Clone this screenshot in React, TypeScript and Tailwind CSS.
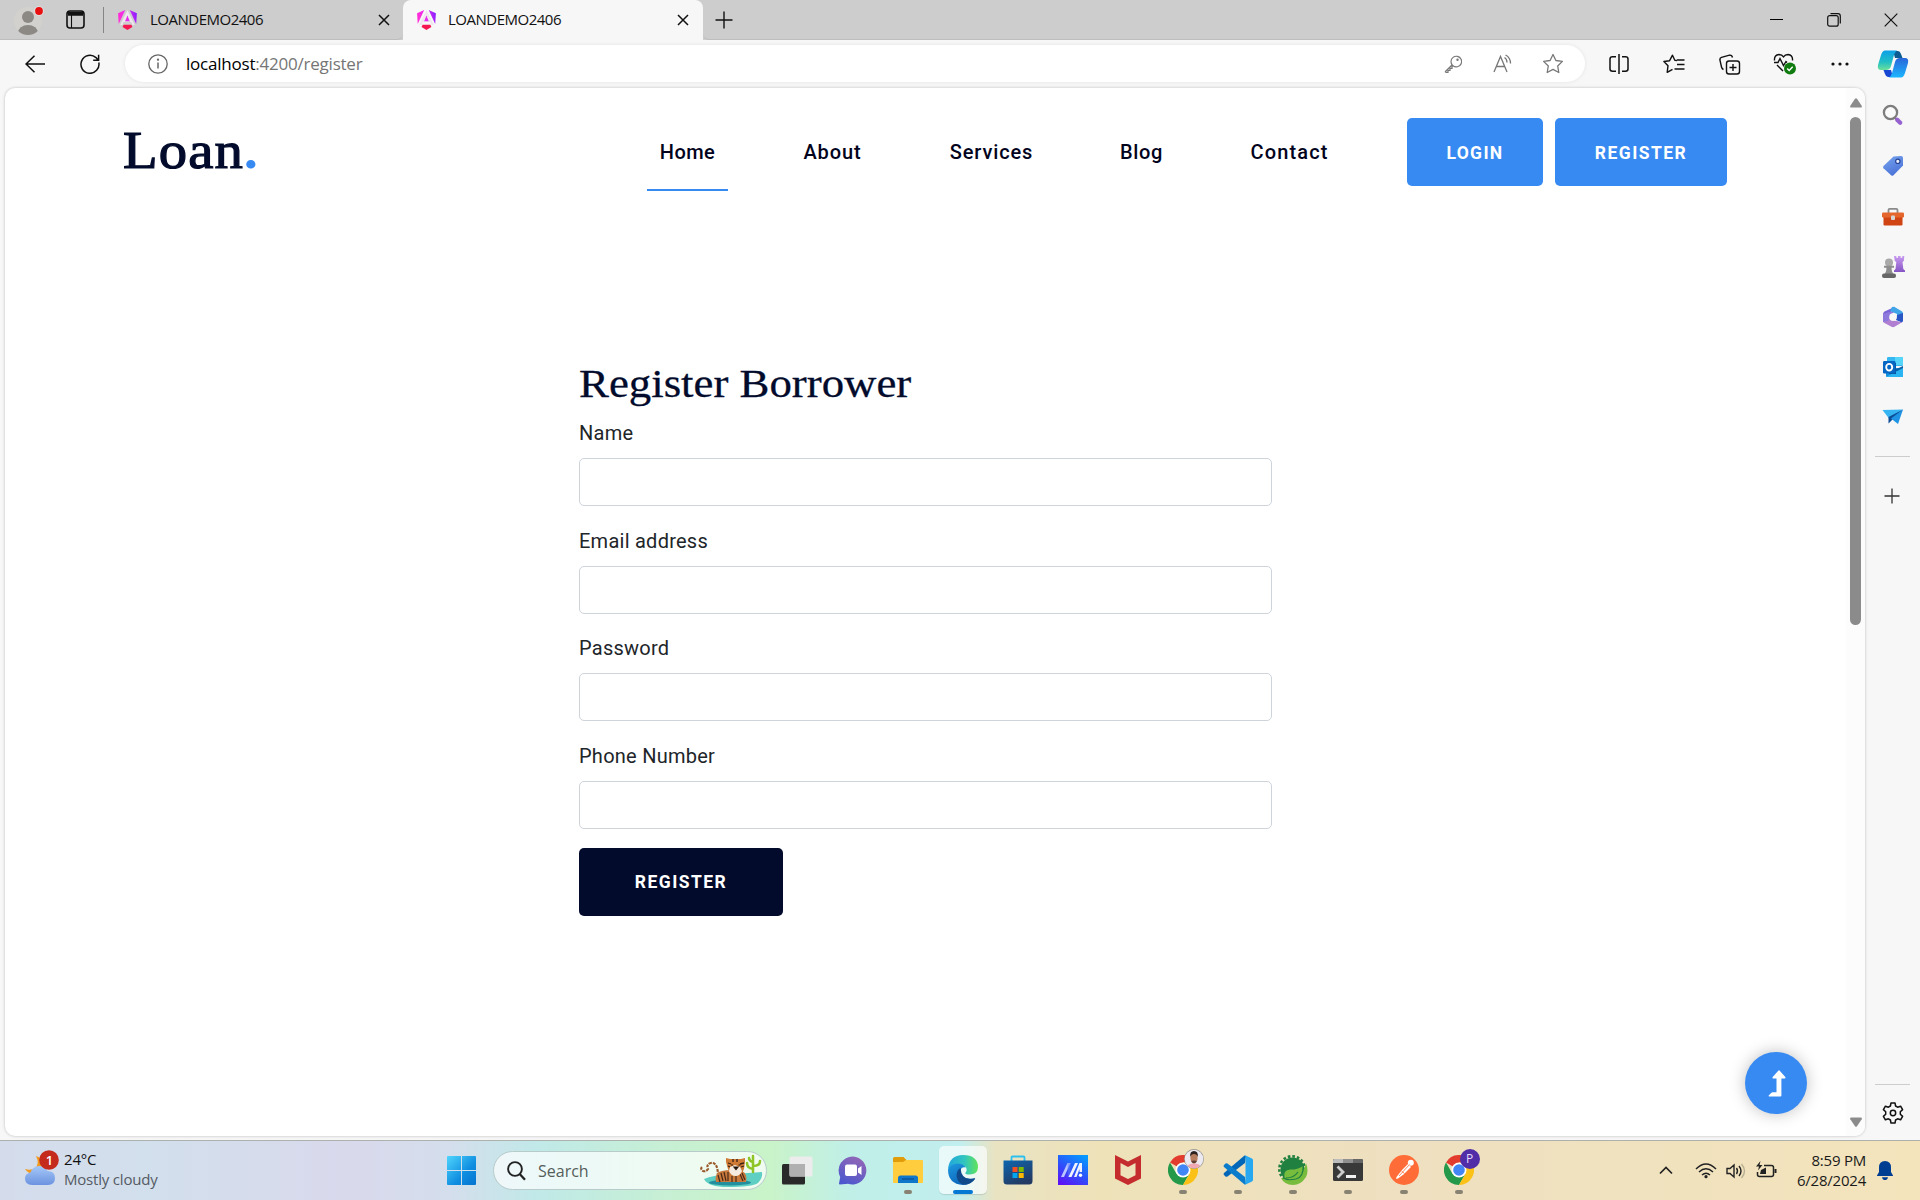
import type { ReactNode } from "react";

type BoxProps = { className?: string; children?: ReactNode };

const UI = "font-['Open_Sans','Noto_Sans',sans-serif]";

function Cell({ className = "", children }: BoxProps) {
  return <div className={`flex shrink-0 items-center justify-center ${className}`}>{children}</div>;
}

/* ---------- Browser chrome icons ---------- */

function AngularLogo({ id }: { id: string }) {
  return (
    <svg width="19" height="20" viewBox="0 0 223 236" className="shrink-0">
      <defs>
        <linearGradient id={id} x1="0" y1="0.3" x2="1" y2="0.1">
          <stop offset="0" stopColor="#ff2fd6" />
          <stop offset="0.55" stopColor="#e22bf5" />
          <stop offset="1" stopColor="#7a1cff" />
        </linearGradient>
      </defs>
      <path
        fill={`url(#${id})`}
        d="M222.077 39.192l-8.019 125.923L137.387 0l84.69 39.192zM111.039 62.675l30.357 73.803H80.681l30.358-73.803zM7.937 165.115L0 39.192 84.69 0 7.937 165.115z"
      />
      <path fill="#f5174f" d="M168.972 202.017l-57.933 33.056-57.934-33.056 11.783-28.556h92.301z" />
      <path fill="#eee5ee" d="M111 2L24 178h28l14-35h90l14 35h28zM111 62l30 74H80z" fillRule="evenodd" />
    </svg>
  );
}

function CloseX() {
  return (
    <svg width="12" height="12" viewBox="0 0 12 12" stroke="#111" strokeWidth="1.5">
      <path d="M1 1L11 11M11 1L1 11" />
    </svg>
  );
}

function Profile() {
  return (
    <svg width="32" height="32" viewBox="0 0 32 32">
      <defs>
        <clipPath id="pf"><circle cx="15" cy="17" r="14" /></clipPath>
      </defs>
      <circle cx="15" cy="17" r="14" fill="#d3d1cd" />
      <g clipPath="url(#pf)" fill="#8c8985">
        <circle cx="15" cy="13" r="6" />
        <ellipse cx="15" cy="29" rx="10" ry="8" />
      </g>
      <circle cx="26" cy="7" r="4.8" fill="#e3e3e3" />
      <circle cx="26" cy="7" r="3.9" fill="#e81010" />
    </svg>
  );
}

function TabActions() {
  return (
    <svg width="19" height="19" viewBox="0 0 19 19" fill="none" stroke="#111" strokeWidth="1.6">
      <rect x="1" y="1" width="17" height="17" rx="3" />
      <path d="M2 3h15M2 4.5h15" strokeWidth="2.4" />
      <path d="M5.5 5v13" strokeWidth="1.1" />
    </svg>
  );
}

/* ---------- Sidebar icons ---------- */

function SideSearch() {
  return (
    <svg width="22" height="22" viewBox="0 0 22 22" fill="none">
      <path d="M12.5 13.5l3 3" stroke="#777" strokeWidth="2" />
      <circle cx="8.5" cy="8.5" r="6.6" stroke="#7d7d7d" strokeWidth="2.3" fill="#fafafa" />
      <path d="M15.2 15.7l3 3" stroke="#9662cf" strokeWidth="4.2" strokeLinecap="round" />
    </svg>
  );
}
function SideTag() {
  return (
    <svg width="22" height="22" viewBox="0 0 22 22">
      <defs><linearGradient id="tg" x1="0" y1="0" x2="0.5" y2="1"><stop stopColor="#78a6ee" /><stop offset="1" stopColor="#4b73d8" /></linearGradient></defs>
      <path d="M11.5 1.5L19 1q2 0 2 2v7.500L11.500 20.300q-1.200 1-2.400 0L1.500 13.300q-1-1.200 0-2.400z" fill="url(#tg)" />
      <circle cx="15.8" cy="6.300" r="2.200" fill="#e8f0ff" stroke="#264394" strokeWidth="1.200" />
    </svg>
  );
}
function SideBriefcase() {
  return (
    <svg width="24" height="20" viewBox="0 0 24 20">
      <path d="M7.500 6V3q0-1.200 1.200-1.200h6.600q1.200 0 1.200 1.200v3" fill="none" stroke="#8a8a8a" strokeWidth="1.800" />
      <rect x="2.500" y="9" width="19" height="9.500" rx="1.200" fill="#cf4412" />
      <rect x="1" y="5.500" width="22" height="5" rx="1.200" fill="#e5662d" />
      <rect x="10" y="8.500" width="4" height="4.500" rx="1" fill="#d5d5d5" />
    </svg>
  );
}
function SideGames() {
  return (
    <svg width="24" height="24" viewBox="0 0 24 24">
      <defs><linearGradient id="gm" x1="0" y1="0" x2="0" y2="1"><stop stopColor="#c99af0" /><stop offset="1" stopColor="#8454c4" /></linearGradient></defs>
      <path d="M13 1h2.300v1.800h1.700V1h2.600v1.800h1.700V1h2l-.500 5-1.300 1 .8 7 1.700 1.500V17H13v-1.500L14.500 14l.8-7-1.500-1z" fill="url(#gm)" />
      <circle cx="8" cy="7.500" r="4" fill="#a9a9a9" />
      <path d="M3 10.800h10v2h-2.500q0 4 1.700 6.200H3.800q1.700-2 1.700-6.200H3z" fill="#8d8d8d" />
      <rect x="1" y="18.500" width="14" height="4.500" rx="2" fill="#666" />
    </svg>
  );
}
function SideM365() {
  return (
    <svg width="22" height="22" viewBox="0 0 22 22">
      <path d="M13 .8L2.500 5.500Q1 6.500 1 8v8l6.500-3V8.500z" fill="#7a63d6" />
      <path d="M10 1q1.300-.7 2.600 0l7.200 4.200Q21 6 21 7.500V14l-6-4V8L8 5z" fill="#3fa4e8" />
      <path d="M15 9l6-2v7.500q0 1.300-1.200 2L14 14z" fill="#2a55c4" />
      <path d="M1 15l6-3 2 2.500 5.500.5 5.700 1.200-7.700 4.600q-1.500.7-3 0L2 16.800Q1 16.200 1 15z" fill="#b07fd2" />
      <path d="M7 6l5 0-4 4-2 5-5 1V8z" fill="#8d78dc" />
      <circle cx="11" cy="11" r="3.800" fill="#f7f7f7" />
    </svg>
  );
}
function SideOutlook() {
  return (
    <svg width="22" height="22" viewBox="0 0 22 22">
      <rect x="5" y="1" width="16" height="9" rx="1.200" fill="#35b8f1" />
      <rect x="13" y="1" width="8" height="8" fill="#56d5fb" />
      <path d="M4 12h17v8q0 1-1 1H5q-1 0-1-1z" fill="#1490df" />
      <path d="M21 10v9.500L12.500 14z" fill="#0b5fa5" />
      <path d="M4 21l17-9v8q0 1-1 1z" fill="#2ab5f2" />
      <path d="M14 7v11H7V7z" fill="#0a4f93" />
      <rect x="1" y="5" width="12.500" height="12.500" rx="1.200" fill="#0668c4" />
      <ellipse cx="7.200" cy="11.200" rx="3" ry="3.300" fill="none" stroke="#fff" strokeWidth="1.900" />
    </svg>
  );
}
function SidePlane() {
  return (
    <svg width="22" height="18" viewBox="0 0 22 18">
      <path d="M0.500 2L21 1.500 7 10.500z" fill="#37b5f2" />
      <path d="M21 1.500L6.500 9v6.500L10 12z" fill="#0c4f96" />
      <path d="M21 1.500L9 10.500l7 5.500z" fill="#1f93e4" />
    </svg>
  );
}
function Copilot() {
  return (
    <svg width="32" height="30" viewBox="0 0 32 30">
      <defs>
        <linearGradient id="cp1" x1="0" y1="0" x2="0" y2="1"><stop stopColor="#0ca0e8" /><stop offset="0.600" stopColor="#23bfc4" /><stop offset="1" stopColor="#6be19a" /></linearGradient>
        <linearGradient id="cp2" x1="0" y1="0" x2="0" y2="1"><stop stopColor="#2a66d9" /><stop offset="1" stopColor="#1cb6ff" /></linearGradient>
      </defs>
      <path d="M16 2h5q2 0 3 3l1.500 4H18z" fill="#0b5c93" />
      <path d="M16 28h-5q-2 0-3-3l-1.500-4H14z" fill="#1847d4" />
      <path d="M8 1.500h12q-2 1-3 4.500l-3 11q-1 4-5 4H4q-4 0-3-5L4 6q1.500-4.500 4-4.500z" fill="url(#cp1)" />
      <path d="M24 28.500H12q2-1 3-4.500l3-11q1-4 5-4h5q4 0 3 5l-3 10q-1.500 4.500-4 4.500z" fill="url(#cp2)" />
    </svg>
  );
}

/* ---------- Browser sections ---------- */

function TabStrip() {
  return (
    <div className={`flex h-10 shrink-0 bg-[#cdcdcd] text-[15px] leading-none text-[#111] ${UI}`}>
      <div className="flex h-10 w-[403px] items-center rounded-br-[6px] border-b border-[#bdbdbd]">
        <Cell className="ml-[13px] w-8"><Profile /></Cell>
        <Cell className="ml-[20px] w-[20px]"><TabActions /></Cell>
        <div className="ml-[18px] h-[26px] w-px bg-[#858585]" />
        <div className="ml-[14px]"><AngularLogo id="ng1" /></div>
        <span className="ml-[13px] w-[220px] whitespace-nowrap tracking-[-0.5px]">LOANDEMO2406</span>
        <Cell className="ml-[8px] w-3"><CloseX /></Cell>
      </div>
      <div className="flex h-10 w-[300px] items-center rounded-t-[8px] bg-[#f7f7f7] pb-px">
        <div className="ml-[14px]"><AngularLogo id="ng2" /></div>
        <span className="ml-[12px] w-[220px] whitespace-nowrap tracking-[-0.5px]">LOANDEMO2406</span>
        <Cell className="ml-[9px] w-3"><CloseX /></Cell>
      </div>
      <div className="flex flex-1 items-center rounded-bl-[6px] border-b border-[#bdbdbd]">
        <svg width="18" height="18" viewBox="0 0 18 18" stroke="#111" strokeWidth="1.400" className="ml-[12px]">
          <path d="M9 0.500v17M0.500 9h17" />
        </svg>
        <div className="flex-1" />
        <Cell className="w-[57px]"><div className="h-[1.500px] w-[13px] bg-black" /></Cell>
        <Cell className="w-[57px]">
          <svg width="14" height="14" viewBox="0 0 14 14" fill="none" stroke="#111" strokeWidth="1.200">
            <rect x="0.700" y="2.700" width="10.500" height="10.500" rx="2" />
            <path d="M3.500 0.700H11q2.300 0 2.300 2.300v7.500" />
          </svg>
        </Cell>
        <Cell className="w-[58px]">
          <svg width="14" height="14" viewBox="0 0 14 14" stroke="#111" strokeWidth="1.200"><path d="M0.700 0.700l12.600 12.600M13.300 0.700L0.700 13.300" /></svg>
        </Cell>
      </div>
    </div>
  );
}

function Toolbar() {
  return (
    <div className="flex h-12 shrink-0 items-center bg-[#f7f7f7]">
      <Cell className="ml-[24px] w-[22px]">
        <svg width="20" height="18" viewBox="0 0 20 18" fill="none" stroke="#111" strokeWidth="1.500"><path d="M20 9H1M9.500 0.700L1 9l8.500 8.300" /></svg>
      </Cell>
      <Cell className="ml-[33px] w-[22px]">
        <svg width="20" height="20" viewBox="0 0 20 20" fill="none" stroke="#111" strokeWidth="1.500"><path d="M18.800 8.500A9 9 0 1 1 16 3.600L18 6M18.600 0.800V6.200H13.200" /></svg>
      </Cell>
      <div className="ml-[24px] mt-[-1px] flex h-[37px] w-[1460px] items-center rounded-full bg-white shadow-[0_0_4px_rgba(0,0,0,0.080)]">
        <Cell className="ml-[22px] w-[22px]">
          <svg width="20" height="20" viewBox="0 0 20 20" fill="none" stroke="#666" strokeWidth="1.300"><circle cx="10" cy="10" r="9.200" /><path d="M10 8.500v6" strokeWidth="1.500" /><circle cx="10" cy="5.700" r="0.500" fill="#666" /></svg>
        </Cell>
        <span className={`ml-[17px] w-[240px] whitespace-nowrap text-[17px] tracking-[-0.220px] text-[#757575] ${UI}`}>
          <span className="text-black">localhost</span>:4200/register
        </span>
        <div className="flex-1" />
        <Cell className="w-[50px]">
          <svg width="18" height="18" viewBox="0 0 18 18" fill="none" stroke="#777" strokeWidth="1.200">
            <path d="M8.200 9.800L1.500 16.300Q1 17.300 2.500 17.300H4v-2h2v-2h2v-1.800l1-.8A5.300 5.300 0 1 0 7 6.500Q7 8.500 8.200 9.800z" /><circle cx="13.500" cy="4.800" r="0.600" fill="#777" />
          </svg>
        </Cell>
        <Cell className="w-[50px]">
          <svg width="20" height="20" viewBox="0 0 20 20" fill="none" stroke="#777" strokeWidth="1.300">
            <path d="M1 18L7.500 2.500L14 18M3.200 12.500H11.800M11.500 3.500q2.500 1.500 2.500 5M12.500 1q5 2.500 5 8.500" />
          </svg>
        </Cell>
        <Cell className="mr-[7px] w-[50px]">
          <svg width="22" height="21" viewBox="0 0 22 21" fill="none" stroke="#777" strokeWidth="1.300" strokeLinejoin="round">
            <path d="M11 1.500l2.900 6 6.500.9-4.700 4.600 1.100 6.500L11 16.400l-5.800 3.100 1.100-6.500L1.600 8.400l6.500-.9z" />
          </svg>
        </Cell>
      </div>
      <div className="flex flex-1 items-center pl-[6px]">
        <Cell className="w-[55px]">
          <svg width="20" height="20" viewBox="0 0 20 20" fill="none" stroke="#111" strokeWidth="1.500"><path d="M10 0v20M7 2.800H3.500Q1 2.800 1 5v10q0 2.200 2.500 2.200H7M13 2.800h3.500Q19 2.800 19 5v10q0 2.200-2.500 2.200H13" /></svg>
        </Cell>
        <Cell className="w-[56px]">
          <svg width="22" height="20" viewBox="0 0 22 20" fill="none" stroke="#111" strokeWidth="1.400" strokeLinejoin="round"><path d="M14 6.500L11.800 6.200 9.500 1.200 6.600 6.700.9 7.500 5 11.700 4.200 18.300 9.500 15.300M14 6h7.500M14 10.500h7.500M11.500 15h10" /></svg>
        </Cell>
        <Cell className="w-[55px]">
          <svg width="22" height="21" viewBox="0 0 22 21" fill="none" stroke="#111" strokeWidth="1.400"><rect x="7.500" y="7" width="13" height="13" rx="2.500" /><path d="M14 10v7M10.500 13.500h7M4.500 15.500Q3 15 2.500 13L.9 6Q.700 4 2.500 3.400L10.500 1.200Q13 .9 13.500 3.500" /></svg>
        </Cell>
        <Cell className="w-[55px]">
          <svg width="23" height="22" viewBox="0 0 23 22" fill="none" stroke="#111" strokeWidth="1.400"><path d="M1.500 7.500Q1 2 6 1.500q3 0 4.500 2.300Q12 1.500 15 1.500q5 .5 4.500 6M4 12l6 6M1 9.500h4l2-4 3.500 7 2.500-4 1 1" /><circle cx="17" cy="15.500" r="6" fill="#107c10" stroke="none" /><path d="M14.200 15.500l2 2 3.500-3.700" stroke="#fff" /></svg>
        </Cell>
        <Cell className="w-[55px]">
          <svg width="18" height="4" viewBox="0 0 18 4" fill="#111"><circle cx="2" cy="2" r="1.600" /><circle cx="9" cy="2" r="1.600" /><circle cx="16" cy="2" r="1.600" /></svg>
        </Cell>
        <Cell className="w-[52px]"><Copilot /></Cell>
      </div>
    </div>
  );
}

/* ---------- Web page ---------- */

function NavLink({ label, className, active = false }: { label: string; className: string; active?: boolean }) {
  return (
    <a className={`relative flex h-full shrink-0 items-center justify-center whitespace-nowrap ${className}`}>
      {label}
      {active && <span className="absolute inset-x-0 -bottom-[5px] h-[2px] bg-[#378af2]" />}
    </a>
  );
}

function SiteHeader() {
  return (
    <header className="flex h-[68px] items-center pl-[118px] text-[20px] font-medium text-[#02031c]">
      <div className="mt-[-3px] w-[524px] shrink-0 whitespace-nowrap font-['Liberation_Serif',serif] text-[52px] font-normal leading-none text-[#020b2b]">
        <span className="inline-block origin-left scale-x-[1.090] tracking-[1px] [-webkit-text-stroke:1.200px_#020b2b]">
          Loan<span className="font-bold text-[#378af2] [-webkit-text-stroke:0px]">.</span>
        </span>
      </div>
      <NavLink label="Home" className="w-[81px] tracking-[0.400px]" active />
      <NavLink label="About" className="ml-[62px] w-[85px] tracking-[0.900px]" />
      <NavLink label="Services" className="ml-[62px] w-[109px] tracking-[0.850px]" />
      <NavLink label="Blog" className="ml-[61px] w-[69px] tracking-[0.700px]" />
      <NavLink label="Contact" className="ml-[61px] w-[105px] tracking-[1.150px]" />
      <button className="ml-[65px] h-[68px] w-[136px] shrink-0 rounded-[5px] bg-[#378af2] pt-[2px] text-[17.500px] font-bold tracking-[1.350px] text-white">LOGIN</button>
      <button className="ml-[12px] h-[68px] w-[172px] shrink-0 rounded-[5px] bg-[#378af2] pt-[2px] text-[17.500px] font-bold tracking-[1.450px] text-white">REGISTER</button>
    </header>
  );
}

function Field({ label }: { label: string }) {
  return (
    <label className="flex h-[107.500px] flex-col">
      <span className="h-[38px] text-[20px] leading-[27px] tracking-[0.250px] text-[#212529]">{label}</span>
      <input className="h-[48px] w-full rounded-[5px] border border-[#ced4da] bg-white" />
    </label>
  );
}

function WebPage() {
  return (
    <main className="relative ml-[5px] flex h-[1048px] w-[1860px] shrink-0 overflow-hidden rounded-[10px] bg-white font-[Roboto,sans-serif] shadow-[0_0_3px_rgba(0,0,0,0.250)]">
      <div className="w-[1841px] pt-[30px]">
        <SiteHeader />
        <form className="ml-[574px] mt-[171px] w-[693px]">
          <h2 className="h-[63px] origin-left scale-x-[1.093] whitespace-nowrap font-['Liberation_Serif',serif] text-[41px] leading-[52px] text-[#020b2b] [-webkit-text-stroke:0.300px_#020b2b]">Register Borrower</h2>
          <Field label="Name" />
          <Field label="Email address" />
          <Field label="Password" />
          <Field label="Phone Number" />
          <button type="button" className="-mt-[2px] h-[68px] w-[204px] rounded-[5px] bg-[#020b2b] pt-[1px] text-[17.500px] font-bold tracking-[1.450px] text-white">REGISTER</button>
        </form>
      </div>
      <div className="flex w-[19px] flex-col items-center bg-[#fcfcfc] pt-[10px]">
        <svg width="12" height="10" viewBox="0 0 12 10" fill="#8b8b8b"><path d="M5 .8Q6-.4 7 .8l4.700 7Q12.200 9.500 11 9.500H1Q-.2 9.500.3 7.800z" /></svg>
        <div className="mt-[9px] h-[508px] w-[11px] rounded-full bg-[#8b8b8b]" />
        <div className="flex-1" />
        <svg width="12" height="10" viewBox="0 0 12 10" fill="#8b8b8b" className="mb-[9px] rotate-180"><path d="M5 .8Q6-.4 7 .8l4.700 7Q12.200 9.500 11 9.500H1Q-.2 9.500.3 7.800z" /></svg>
      </div>
      <button className="absolute bottom-[22px] right-[58px] flex size-[62px] items-center justify-center rounded-full bg-[#378af2] shadow-[0_0_16px_rgba(0,0,0,0.250)]">
        <svg width="18" height="27" viewBox="0 0 18 27" fill="#fff" className="ml-[1px]"><path d="M10.500.6Q11 .1 11.500.6l5.800 6.500q.6 1.200-.7 1.300h-3.200v17.100q0 1-1 1H1.300Q0 26.300.9 25.200l2.500-2.400q.5-.6 1.300-.6H8.500V8.400H5.200Q3.900 8.300 4.700 7.100z" /></svg>
      </button>
    </main>
  );
}

function Sidebar() {
  return (
    <aside className="flex h-[1052px] w-[55px] shrink-0 flex-col items-center">
      <Cell className="h-[54px]"><SideSearch /></Cell>
      <Cell className="h-[48px]"><SideTag /></Cell>
      <Cell className="h-[54px]"><SideBriefcase /></Cell>
      <Cell className="h-[46px]"><SideGames /></Cell>
      <Cell className="h-[53px]"><SideM365 /></Cell>
      <Cell className="h-[47px]"><SideOutlook /></Cell>
      <Cell className="h-[53px]"><SidePlane /></Cell>
      <div className="mt-[13px] h-px w-[35px] bg-[#cdcdcd]" />
      <svg width="16" height="16" viewBox="0 0 16 16" stroke="#333" strokeWidth="1.300" className="mr-[1px] mt-[31px]"><path d="M8 .5v15M.5 8h15" /></svg>
      <div className="flex-1" />
      <div className="h-px w-[35px] bg-[#cdcdcd]" />
      <svg width="22" height="22" viewBox="0 0 22 22" fill="none" stroke="#111" strokeWidth="1.500" strokeLinejoin="round" className="mb-[16px] mt-[17px]">
        <path d="M9 1h4l.6 3 2 1.200 3-1 2 3.400L18.300 9.800v2.400l2.300 2.200-2 3.400-3-1-2 1.200L13 21H9l-.6-3-2-1.200-3 1-2-3.400 2.300-2.200V9.800L1.400 7.600l2-3.400 3 1 2-1.200z" />
        <circle cx="11" cy="11" r="2.700" />
      </svg>
    </aside>
  );
}

/* ---------- Taskbar ---------- */

function Weather() {
  return (
    <svg width="36" height="38" viewBox="0 0 36 38">
      <defs><linearGradient id="cl" x1="0" y1="0" x2="0" y2="1"><stop stopColor="#a5c8f8" /><stop offset="1" stopColor="#6c93e0" /></linearGradient></defs>
      <path d="M12 7q4 8-1 12-4 3-10 1Q4 25 11 25q8-1 8-9 0-7-7-9z" fill="#f19a1f" />
      <path d="M8 36q-7 0-7-6.500 0-5 5.500-6Q9 17 15 17q6.500 0 8.500 5 7.500 0 7.500 7t-7 7z" fill="url(#cl)" />
      <circle cx="25" cy="11" r="9.800" fill="#c42b1c" />
      <text x="21.700" y="15.500" fontSize="13" fontWeight="600" fill="#fff" fontFamily="Open Sans">1</text>
    </svg>
  );
}
function WindowsLogo() {
  return (
    <svg width="29" height="29" viewBox="0 0 29 29">
      <defs><linearGradient id="wn" x1="0" y1="0" x2="1" y2="1"><stop stopColor="#4fd5fd" /><stop offset="0.600" stopColor="#0f8ee0" /><stop offset="1" stopColor="#0573d0" /></linearGradient></defs>
      <path fill="url(#wn)" d="M1 0h13v14H0V1q0-1 1-1zM15 0h13q1 0 1 1v13H15zM0 15h14v14H1q-1 0-1-1zM15 15h14v13q0 1-1 1H15z" />
    </svg>
  );
}
function Tiger() {
  return (
    <svg width="64" height="34" viewBox="0 0 64 34">
      <path d="M5 25q8-4 30-5l28-2q1 6-4 11-6 4-30 4-20 0-24-8z" fill="#5fcfc4" />
      <ellipse cx="31" cy="28.500" rx="21" ry="3" fill="#238f9e" />
      <path d="M19 22Q19 8 12 9q-5 1-3 6-2 3-5 2-3-2-1-4" fill="none" stroke="#9b5a2b" strokeWidth="2.200" strokeDasharray="3 1" />
      <path d="M17 28q-2-10 6-11 8-2 20 0 6 3 4 11z" fill="#c9793c" />
      <path d="M19 21l2 7M22 19l2 8M25 18l2 9M29 18v9M41 20l3 7M43 19l3 7M33 22v6M37 22v6" stroke="#4a2a18" strokeWidth="1.200" />
      <path d="M27 4l4 1h11l4-1v4l-1 7q-2 6-8 6.500-6-.5-8-6.500l-2-7z" fill="#cf7a35" />
      <path d="M31 13l5-2 5 2 2 4q-2 5-6.500 5T30 17z" fill="#f4eadf" />
      <path d="M34 5v3M38 5v3M29 9l3 1M45 9l-4 1M29 12l2 1M45 12l-3 1" stroke="#3c2214" strokeWidth="1.300" />
      <path d="M35 13h4l-2 2.500zM32 11h2M39.500 11h2" stroke="#2b1a12" strokeWidth="1.200" />
      <path d="M54 18V2M54 15q-6-1-6-6M54 12q7 0 7-5M54 8q-4-1-4-4" stroke="#8fc427" strokeWidth="2.500" fill="none" strokeLinecap="round" />
    </svg>
  );
}
function TaskView() {
  return (
    <svg width="31" height="29" viewBox="0 0 31 29">
      <rect x="0" y="8" width="23" height="20.500" rx="1.500" fill="#292929" />
      <rect x="7.500" y="0.500" width="23" height="20" rx="1.500" fill="#ececec" />
      <path d="M7.500 8H23v12.500H9q-1.500 0-1.500-1.500z" fill="#b0b0b0" />
    </svg>
  );
}
function Chat() {
  return (
    <svg width="30" height="29" viewBox="0 0 30 29">
      <defs><linearGradient id="ct" x1="0.800" y1="0" x2="0.300" y2="1"><stop stopColor="#9567b5" /><stop offset="1" stopColor="#4d58ce" /></linearGradient></defs>
      <path d="M15 .5a14 14 0 1 1-5 27.300L2 28.500q-1.200 0-1-1l1.200-6.500A14 14 0 0 1 15 .5z" fill="url(#ct)" />
      <rect x="7" y="8.500" width="12" height="11.500" rx="2" fill="#fff" /><path d="M20 12.500l3.500-2.500v9L20 16.500z" fill="#fff" />
    </svg>
  );
}
function Folder() {
  return (
    <svg width="30" height="28" viewBox="0 0 30 28">
      <path d="M1.500 1h9l3 3H22v6H0V2.500Q0 1 1.500 1z" fill="#e09c09" />
      <path d="M0 6h10l3-2h16q1 0 1 1v22H0z" fill="#ffcd3e" />
      <path d="M5 27v-5q0-2.500 2.500-2.500h15q2.500 0 2.500 2.500v5z" fill="#0f77c9" /><path d="M9 23h12" stroke="#0a4f93" strokeWidth="1.300" />
    </svg>
  );
}
function Edge() {
  return (
    <svg width="30" height="30" viewBox="0 0 30 30">
      <defs>
        <linearGradient id="eg1" x1="0" y1="0.500" x2="1" y2="0.500"><stop stopColor="#22a5dc" /><stop offset="0.550" stopColor="#31c5c0" /><stop offset="1" stopColor="#62e35a" /></linearGradient>
        <linearGradient id="eg2" x1="0" y1="0" x2="0.600" y2="1"><stop stopColor="#1e9ae0" /><stop offset="1" stopColor="#0c62b7" /></linearGradient>
      </defs>
      <path d="M15 0q15 0 15 12.500-.5 7-8.500 7-5 0-4-2 2-2 .5-5Q14 8.500 8 10L0 14Q1.500 0 15 0z" fill="url(#eg1)" />
      <path d="M0 14.500Q3 8.500 10 8.500q6 .500 7.500 4-4-1-5 3-1 10 14.500 8-4 6.500-12 6.500Q0 29 0 14.500z" fill="url(#eg2)" />
      <path d="M12.500 13q-4 2-4 8 1.500 8 8 8.800 7-.8 10.500-5.800.500-1-.5-.7-13 3.200-14-10.300z" fill="#114a8b" />
    </svg>
  );
}
function Store() {
  return (
    <svg width="30" height="30" viewBox="0 0 30 30">
      <defs><linearGradient id="st" x1="0" y1="0" x2="0.500" y2="1"><stop stopColor="#0e66b0" /><stop offset="1" stopColor="#233b64" /></linearGradient></defs>
      <path d="M8.500 7V2.500q0-1 1-1h11q1 0 1 1V7" fill="none" stroke="#2cc0ef" strokeWidth="1.800" />
      <path d="M.5 5.500h29V26q0 3.500-3.500 3.500H4Q.5 29.500.5 26z" fill="url(#st)" />
      <path d="M9.500 12h5v5h-5z" fill="#f25022" /><path d="M15.700 12h5v5h-5z" fill="#7fba00" /><path d="M9.500 18h5v5h-5z" fill="#00a4ef" /><path d="M15.700 18h5v5h-5z" fill="#ffb900" />
    </svg>
  );
}
function MyAsus() {
  return (
    <svg width="30" height="30" viewBox="0 0 30 30">
      <defs><linearGradient id="ma" x1="0.800" y1="0" x2="0.200" y2="1"><stop stopColor="#0799ff" /><stop offset="0.500" stopColor="#2b55fb" /><stop offset="1" stopColor="#5c14f5" /></linearGradient></defs>
      <rect width="30" height="30" fill="url(#ma)" />
      <path d="M3 22L9.500 8h3L6 22z" fill="#b9c6ff" />
      <path d="M9.500 8h3v14H9.800z" fill="#5a7bfc" opacity="0.500" />
      <path d="M10.500 22L17 8h3L13.500 22zM16 22l5.500-14H24v9h-2.500v-3L18.500 22z" fill="#f0f3ff" /><circle cx="22.500" cy="20.300" r="1.700" fill="#fff" />
    </svg>
  );
}
function McAfee() {
  return (
    <svg width="28" height="30" viewBox="0 0 28 30"><path d="M1 0l13 6.500L27 0v23.500L14 30 1 23.500zM6.500 8v12.300L14 24l7.500-3.700V8L14 12z" fill="#c52c2e" fillRule="evenodd" /></svg>
  );
}
function Chrome({ children }: { children?: ReactNode }) {
  return (
    <div className="relative size-[30px]">
      <svg width="30" height="30" viewBox="0 0 30 30">
        <path d="M15 15L2 7.500A15 15 0 0 1 28 7.500H15z" fill="#e33b2e" />
        <path d="M15 15l6.500 3.700L15 30A15 15 0 0 1 2 7.500l6.500 11.200z" fill="#24994a" />
        <path d="M15 7.500h13A15 15 0 0 1 15 30l6.500-11.200z" fill="#fbc116" />
        <circle cx="15" cy="15" r="7.500" fill="#fff" /><circle cx="15" cy="15" r="5.800" fill="#4285f4" />
      </svg>
      {children}
    </div>
  );
}
function Avatar() {
  return (
    <svg width="20" height="20" viewBox="0 0 20 20" className="absolute -top-[6px] left-[16px]">
      <defs><clipPath id="av"><circle cx="10" cy="10" r="9.300" /></clipPath></defs>
      <circle cx="10" cy="10" r="9.900" fill="#8f8f8f" />
      <g clipPath="url(#av)"><rect width="20" height="20" fill="#eceaf0" /><ellipse cx="10" cy="19" rx="7.500" ry="4.500" fill="#f0a9b3" /><ellipse cx="10" cy="9" rx="3.600" ry="5.500" fill="#b77d5f" /><path d="M6.200 8Q5.500 2 10 2t3.800 6q-1-3-3.800-3T6.200 8z" fill="#2c211e" /><path d="M7.200 12q2.800-1 5.600 0-1 2.300-2.800 2.300T7.200 12z" fill="#5f4036" /></g>
    </svg>
  );
}
function VsCode() {
  return (
    <svg width="30" height="30" viewBox="0 0 30 30">
      <path d="M22 8L4.500 21.500q-1 .6-2 0L1 20q-1-1 0-2L21.500 0.500 23 1z" fill="#0066b8" />
      <path d="M22 22L4.500 8.500q-1-.6-2 0L1 10q-1 1 0 2l20.500 17.500L23 29z" fill="#0a7ccb" />
      <path d="M21.500 0l7 3.200q1.500.7 1.500 2v19.600q0 1.300-1.500 2L21.500 30q1-.5 1-2V2q0-1.500-1-2z" fill="#28a8f0" />
    </svg>
  );
}
function Spring() {
  return (
    <svg width="30" height="30" viewBox="0 0 30 30">
      <circle cx="14" cy="14" r="12.700" fill="none" stroke="#1f8040" strokeWidth="2.600" strokeDasharray="2.600 2" />
      <circle cx="14.500" cy="14.500" r="12" fill="#1f8040" />
      <path d="M28 8q3 8 0 14-5 8-13 8Q6 29.500 3 23q10 3 18-3 6-5 7-12z" fill="#77bc3d" />
      <path d="M25 10q1 12-7 14-9 2-12-1Q4 15 12 14q9 0 13-4z" fill="#77bc3d" stroke="#1f8040" strokeWidth="1.100" />
      <path d="M8 23q8 0 12-6" stroke="#1f8040" strokeWidth="1.200" fill="none" />
    </svg>
  );
}
function Terminal() {
  return (
    <svg width="30" height="22" viewBox="0 0 30 22">
      <rect width="30" height="22" rx="1.500" fill="#383838" />
      <path d="M1.500 0H10v4H0V1.500Q0 0 1.500 0z" fill="#bcbcbc" /><path d="M10 0h10v4H10z" fill="#8f8f8f" /><path d="M20 0h8.500Q30 0 30 1.500V4H20z" fill="#666" />
      <path d="M4.500 7.500L10 13l-5.500 5.500" fill="none" stroke="#ccc" strokeWidth="2.800" /><rect x="13" y="16" width="10" height="3" fill="#f0f0f0" />
    </svg>
  );
}
function Postman() {
  return (
    <svg width="30" height="30" viewBox="0 0 30 30">
      <circle cx="15" cy="15" r="15" fill="#ff6c37" />
      <circle cx="21.800" cy="7.700" r="3" fill="#fff" /><path d="M19 9l3 3-7.500 7.500-5.500 4-2 .5.500-2L13 15z" fill="#fff" /><path d="M20.500 9.500L10 21M12.500 16l3 2.500" stroke="#ff6c37" strokeWidth="0.800" />
    </svg>
  );
}

function TaskItem({ children, running = false, active = false }: { children: ReactNode; running?: boolean; active?: boolean }) {
  return (
    <div className="flex h-full w-[55.100px] shrink-0 justify-center">
      <div className={`relative mt-[5px] flex h-12 w-12 items-center justify-center rounded-[5px] ${active ? "bg-[#ffffffa6] shadow-[0_1px_1px_rgba(0,0,0,0.120)]" : ""}`}>
        {children}
        {running && <span className={`absolute bottom-0 h-1 rounded-full ${active ? "w-[20px] bg-[#0578d4]" : "w-2 bg-[#888272]"}`} />}
      </div>
    </div>
  );
}

function Taskbar() {
  return (
    <footer className={`flex h-[60px] shrink-0 items-center border-t border-[#adb1ae] bg-[linear-gradient(90deg,#d4dcec_0,#d2dfec_150px,#d9d9ec_350px,#d4deec_450px,#c0e9e8_540px,#c7f0d2_680px,#c9f3c8_770px,#c0efe8_850px,#c1eeee_960px,#e9e3c2_995px,#eee2b9_1100px,#eee0c0_1400px,#f3e4bc_1920px)] ${UI}`}>
      <div className="ml-[24px] mt-[-6px] w-9 shrink-0"><Weather /></div>
      <div className="-mt-[3px] ml-[4px] w-[383px] shrink-0 whitespace-nowrap text-[15px] leading-[20px] tracking-[-0.200px]">
        <div className="text-[#111]">24°C</div>
        <div className="text-[#555b63]">Mostly cloudy</div>
      </div>
      <WindowsLogo />
      <div className="ml-[17px] flex h-[39px] w-[274px] shrink-0 items-center rounded-full border border-[#b7cbcb] bg-[#ffffffb3]">
        <svg width="19" height="20" viewBox="0 0 19 20" fill="none" stroke="#222" strokeWidth="1.900" className="ml-[13px]"><circle cx="8" cy="8" r="6.900" /><path d="M12.700 13l5.300 5.700" strokeWidth="2.300" /></svg>
        <span className="ml-[12px] w-[161px] text-[16px] text-[#555d5b]">Search</span>
        <Tiger />
      </div>
      <div className="ml-[3px] flex h-full items-center">
        <TaskItem><TaskView /></TaskItem>
        <TaskItem><Chat /></TaskItem>
        <TaskItem running><Folder /></TaskItem>
        <TaskItem running active><Edge /></TaskItem>
        <TaskItem><Store /></TaskItem>
        <TaskItem><MyAsus /></TaskItem>
        <TaskItem><McAfee /></TaskItem>
        <TaskItem running><Chrome><Avatar /></Chrome></TaskItem>
        <TaskItem running><VsCode /></TaskItem>
        <TaskItem running><Spring /></TaskItem>
        <TaskItem running><Terminal /></TaskItem>
        <TaskItem running><Postman /></TaskItem>
        <TaskItem running>
          <Chrome>
            <span className="absolute -top-[6px] left-[16px] flex size-5 items-center justify-center rounded-full bg-[#512da8] text-[12px] leading-none text-[#e6dcf8]">P</span>
          </Chrome>
        </TaskItem>
      </div>
      <div className="flex-1" />
      <svg width="14" height="9" viewBox="0 0 14 9" fill="none" stroke="#222" strokeWidth="1.700" className="mr-[22px]"><path d="M1 7.500l6-6 6 6" /></svg>
      <svg width="22" height="16" viewBox="0 0 22 16" fill="none" stroke="#222" strokeWidth="1.500" className="mr-[9px]"><path d="M1 6Q11-4 21 6M4 9q7-6.500 14 0M7 12q4-3.500 8 0" /><circle cx="11" cy="13.700" r="1.600" fill="#222" stroke="none" /></svg>
      <svg width="20" height="16" viewBox="0 0 20 16" fill="none" stroke="#222" strokeWidth="1.400" className="mr-[10px]"><path d="M1 5.500h3L8 2v12l-4-3.500H1zM10.500 5q2 3 0 6M13 3q4 5 0 10" /><path d="M15.500 1q6 7 0 14" stroke="#b9b094" /></svg>
      <svg width="21" height="18" viewBox="0 0 21 18" fill="none" stroke="#222" strokeWidth="1.500" className="mb-[2px] mr-[19px]"><path d="M8 4.500h7.500q2 0 2 2v7q0 2-2 2h-12q-2 0-2-2V11" /><path d="M18.500 8h2v4h-2zM4 13l1-4 5-2.500v6.500zM4.500 0L0 5.500h3L2 9.500 6.500 4h-3z" fill="#222" stroke="none" /></svg>
      <div className="-mt-[2px] flex w-[70px] shrink-0 flex-col items-end whitespace-nowrap text-[15px] leading-[20px] tracking-[-0.220px] text-[#1a1a1a]">
        <div>8:59 PM</div>
        <div>6/28/2024</div>
      </div>
      <svg width="16" height="19" viewBox="0 0 16 19" fill="#003e92" className="ml-[11px] mr-[27px]"><path d="M8 0q6 0 6 6.500v4.500l2 3.500v.5H0v-.5L2 11V6.500Q2 0 8 0zM5 16.200h6Q10.500 19 8 19T5 16.200z" /></svg>
    </footer>
  );
}

export default function App() {
  return (
    <div className="flex h-[1200px] w-[1920px] flex-col overflow-hidden bg-[#f7f7f7]">
      <TabStrip />
      <Toolbar />
      <div className="flex h-[1052px] shrink-0">
        <WebPage />
        <Sidebar />
      </div>
      <Taskbar />
    </div>
  );
}
